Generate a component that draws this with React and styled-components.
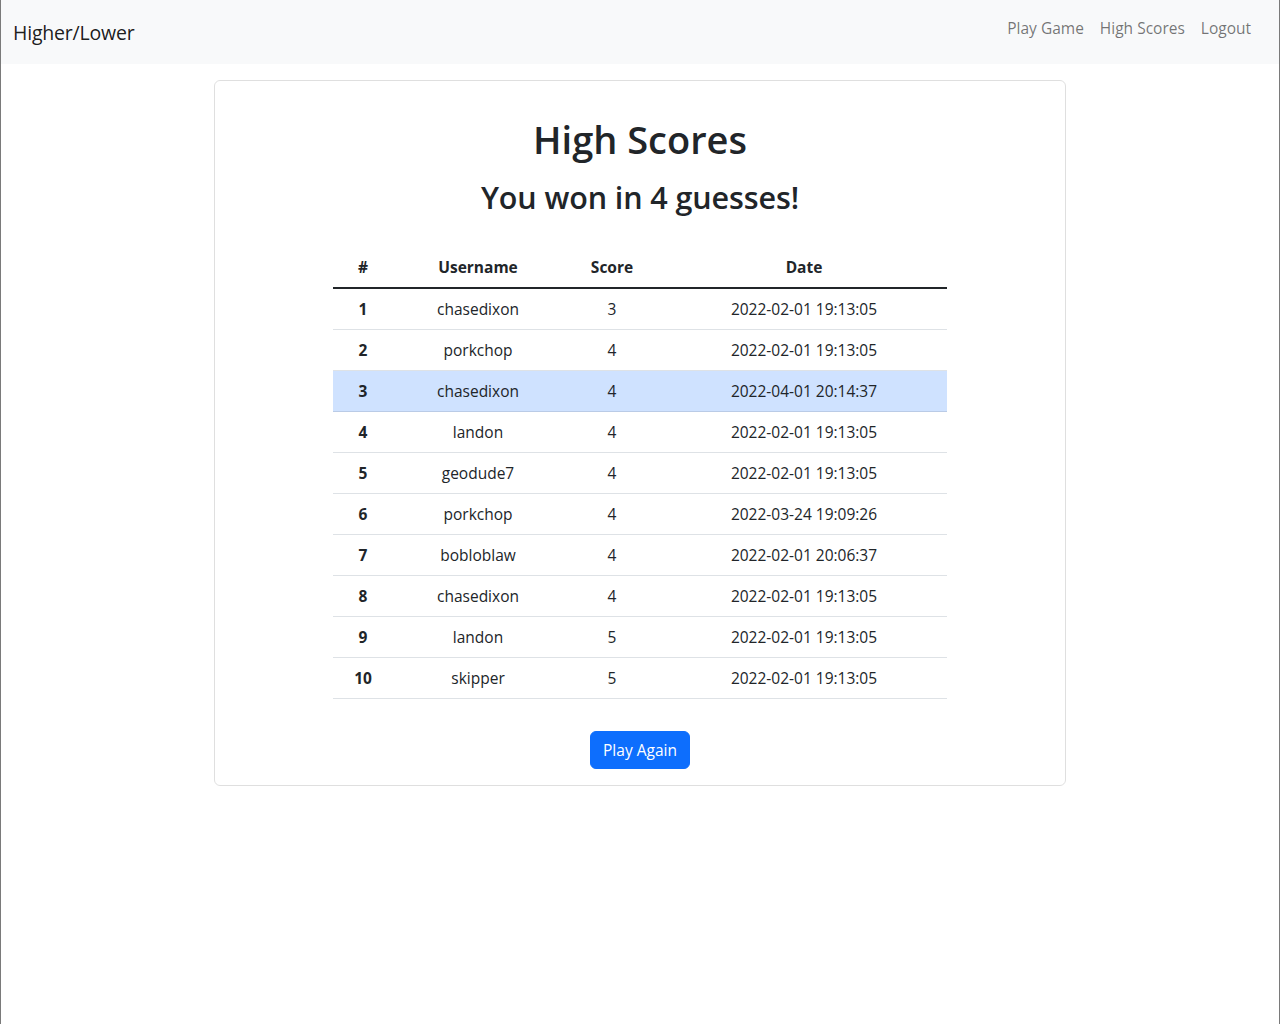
import React from "react";
import styled, { createGlobalStyle } from "styled-components";

const GlobalStyle = createGlobalStyle`
  html, body {
    margin: 0;
    padding: 0;
    background: #fff;
  }
  body {
    font-family: "Open Sans", "Noto Sans", "Liberation Sans", sans-serif;
    color: #212529;
    font-size: 16px;
  }
`;

const Page = styled.div`
  min-height: 100vh;
  box-sizing: border-box;
  border-left: 1px solid #7a7a7a;
  border-right: 1px solid #7a7a7a;
`;

const Navbar = styled.nav`
  height: 64px;
  background: #f8f9fa;
  display: flex;
  align-items: flex-start;
  justify-content: space-between;
  padding: 0 20px 0 12px;
`;

const Brand = styled.a`
  font-size: 19.5px;
  color: rgba(0, 0, 0, 0.9);
  text-decoration: none;
  margin-top: 19px;
  letter-spacing: -0.2px;
`;

const NavLinks = styled.div`
  display: flex;
  margin-top: 17px;
`;

const NavLink = styled.a`
  color: rgba(0, 0, 0, 0.55);
  text-decoration: none;
  padding: 0 8px;
  font-size: 15.5px;
`;

const Card = styled.div`
  width: 852px;
  box-sizing: border-box;
  margin: 16px auto 0;
  border: 1px solid rgba(0, 0, 0, 0.125);
  border-radius: 6px;
  padding: 36px 16px 16px;
  display: flex;
  flex-direction: column;
  align-items: center;
`;

const Title = styled.h1`
  font-size: 38px;
  font-weight: 600;
  line-height: 1.2;
  margin: 0 0 16px;
`;

const Subtitle = styled.h2`
  font-size: 30.5px;
  font-weight: 600;
  line-height: 1.2;
  margin: 0 0 32px;
  letter-spacing: -0.1px;
`;

const Table = styled.table`
  width: 614px;
  table-layout: fixed;
  border-collapse: collapse;
  margin-bottom: 32px;
  font-size: 15.5px;
`;

const HeadCell = styled.th`
  box-sizing: border-box;
  width: ${(p) => p.$w}px;
  padding: 8px;
  line-height: 24px;
  font-weight: 700;
  text-align: center;
  border-bottom: 2px solid #212529;
`;

const Row = styled.tr`
  background: ${(p) => (p.$active ? "#cfe2ff" : "transparent")};
  td {
    border-bottom: 1px solid ${(p) => (p.$active ? "#bacbe6" : "#dee2e6")};
  }
`;

const Cell = styled.td`
  padding: 8px;
  line-height: 24px;
  text-align: center;
  font-weight: ${(p) => (p.$bold ? 700 : 400)};
`;

const Button = styled.button`
  background: #0d6efd;
  color: #fff;
  border: 1px solid #0d6efd;
  border-radius: 6px;
  padding: 6px 12px;
  font-family: inherit;
  font-size: 15.5px;
  line-height: 24px;
  cursor: pointer;
`;

const scores = [
  ["chasedixon", 3, "2022-02-01 19:13:05"],
  ["porkchop", 4, "2022-02-01 19:13:05"],
  ["chasedixon", 4, "2022-04-01 20:14:37"],
  ["landon", 4, "2022-02-01 19:13:05"],
  ["geodude7", 4, "2022-02-01 19:13:05"],
  ["porkchop", 4, "2022-03-24 19:09:26"],
  ["bobloblaw", 4, "2022-02-01 20:06:37"],
  ["chasedixon", 4, "2022-02-01 19:13:05"],
  ["landon", 5, "2022-02-01 19:13:05"],
  ["skipper", 5, "2022-02-01 19:13:05"],
];

const App = () => {
  return (
    <Page>
      <GlobalStyle />
      <Navbar>
        <Brand href="#">Higher/Lower</Brand>
        <NavLinks>
          <NavLink href="#">Play Game</NavLink>
          <NavLink href="#">High Scores</NavLink>
          <NavLink href="#">Logout</NavLink>
        </NavLinks>
      </Navbar>
      <Card>
        <Title>High Scores</Title>
        <Subtitle>You won in 4 guesses!</Subtitle>
        <Table>
          <thead>
            <tr>
              <HeadCell $w={60}>#</HeadCell>
              <HeadCell $w={170}>Username</HeadCell>
              <HeadCell $w={98}>Score</HeadCell>
              <HeadCell $w={286}>Date</HeadCell>
            </tr>
          </thead>
          <tbody>
            {scores.map(([name, score, date], i) => (
              <Row key={i} $active={i === 2}>
                <Cell $bold>{i + 1}</Cell>
                <Cell>{name}</Cell>
                <Cell>{score}</Cell>
                <Cell>{date}</Cell>
              </Row>
            ))}
          </tbody>
        </Table>
        <Button>Play Again</Button>
      </Card>
    </Page>
  );
};

export default App;
